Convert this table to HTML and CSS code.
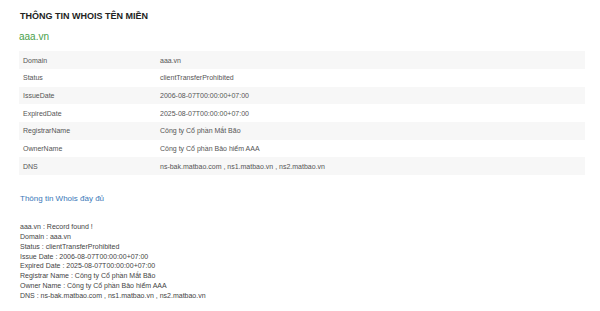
FILE: index.html
```html
<!DOCTYPE html>
<html lang="vi">
<head>
<meta charset="utf-8">
<link rel="stylesheet" href="styles.css">
</head>
<body>
<div class="page">
  <h1 class="title">THÔNG TIN WHOIS TÊN MIỀN</h1>
  <div class="domain">aaa.vn</div>
  <table class="info">
    <tr><td class="k">Domain</td><td>aaa.vn</td></tr>
    <tr><td class="k">Status</td><td>clientTransferProhibited</td></tr>
    <tr><td class="k">IssueDate</td><td>2006-08-07T00:00:00+07:00</td></tr>
    <tr><td class="k">ExpiredDate</td><td>2025-08-07T00:00:00+07:00</td></tr>
    <tr><td class="k">RegistrarName</td><td>Công ty Cổ phần Mắt Bão</td></tr>
    <tr><td class="k">OwnerName</td><td>Công ty Cổ phần Bảo hiểm AAA</td></tr>
    <tr><td class="k">DNS</td><td>ns-bak.matbao.com , ns1.matbao.vn , ns2.matbao.vn</td></tr>
  </table>
  <h2 class="full-title">Thông tin Whois đầy đủ</h2>
  <div class="raw">
    <div>aaa.vn : Record found !</div>
    <div>Domain : aaa.vn</div>
    <div>Status : clientTransferProhibited</div>
    <div>Issue Date : 2006-08-07T00:00:00+07:00</div>
    <div>Expired Date : 2025-08-07T00:00:00+07:00</div>
    <div>Registrar Name : Công ty Cổ phần Mắt Bão</div>
    <div>Owner Name : Công ty Cổ phần Bảo hiểm AAA</div>
    <div>DNS : ns-bak.matbao.com , ns1.matbao.vn , ns2.matbao.vn</div>
  </div>
</div>
</body>
</html>
```
FILE: styles.css
```css
html, body {
  margin: 0;
  padding: 0;
  background: #ffffff;
}
body {
  font-family: "Liberation Sans", Arial, sans-serif;
  color: #555555;
}
.page {
  width: 566px;
  padding: 11px 0 0 19px;
}
.title {
  margin: 0 0 0 1px;
  font-size: 9px;
  line-height: 11px;
  font-weight: bold;
  color: #222222;
}
.domain {
  margin: 9px 0 0 0;
  font-size: 10px;
  line-height: 12px;
  color: #4aa04a;
}
.info {
  margin-top: 8.3px;
  width: 566px;
  border-collapse: collapse;
  font-size: 7px;
  color: #555555;
}
.info tr {
  height: 17.7px;
}
.info tr:nth-child(odd) {
  background: #f7f7f7;
}
.info td {
  padding: 0;
  vertical-align: middle;
}
.info td.k {
  width: 137px;
  padding-left: 4px;
}
.full-title {
  margin: 18.7px 0 0 1px;
  font-size: 8px;
  line-height: 10px;
  font-weight: normal;
  color: #3a78b8;
}
.raw {
  margin: 18px 0 0 1px;
  font-size: 7px;
  line-height: 9.9px;
  color: #444444;
}
```
